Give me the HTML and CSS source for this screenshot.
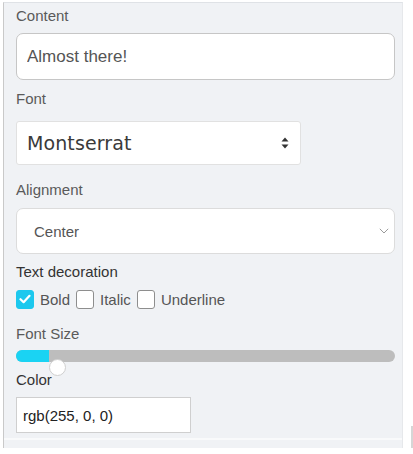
FILE: index.html
```html
<!DOCTYPE html>
<html>
<head>
<meta charset="utf-8">
<link rel="stylesheet" href="styles.css">
</head>
<body>
<div class="page">
  <div class="panel">
    <div class="form">
      <div class="label l-content">Content</div>
      <input class="text-input" type="text" value="Almost there!">
      <div class="label l-font">Font</div>
      <div class="select select-font">
        <span class="font-value">Montserrat</span>
        <svg class="updown" width="8" height="12" viewBox="0 0 8 12"><path d="M4 0.5 L7.5 4.5 H0.5 Z" fill="#333"/><path d="M4 11.5 L7.5 7.5 H0.5 Z" fill="#333"/></svg>
      </div>
      <div class="label l-align">Alignment</div>
      <div class="select select-align">
        <span class="align-value">Center</span>
        <svg class="chev" width="10" height="6" viewBox="0 0 10 6"><path d="M0.8 0.8 L5 5 L9.2 0.8" fill="none" stroke="#9a9a9a" stroke-width="1"/></svg>
      </div>
      <div class="label dark l-deco">Text decoration</div>
      <div class="checks">
        <span class="check on"><svg width="12" height="10" viewBox="0 0 12 10"><path d="M1.5 5.2 L4.6 8.2 L10.5 1.8" fill="none" stroke="#fff" stroke-width="2.2" stroke-linecap="round" stroke-linejoin="round"/></svg></span>
        <span class="check-label">Bold</span>
        <span class="check"></span>
        <span class="check-label">Italic</span>
        <span class="check"></span>
        <span class="check-label">Underline</span>
      </div>
      <div class="label l-size">Font Size</div>
      <div class="slider">
        <div class="fill" style="width: 33px"></div>
        <div class="thumb"></div>
      </div>
      <div class="label dark l-color">Color</div>
      <input class="color-input" type="text" value="rgb(255, 0, 0)">
    </div>
    <div class="sep"></div>
  </div>
  <div class="gutter"><div class="bar"></div></div>
</div>
</body>
</html>
```

FILE: styles.css
```css
html, body {
  margin: 0;
  padding: 0;
  background: #ffffff;
}
body {
  font-family: "Liberation Sans", Arial, sans-serif;
  width: 413px;
  height: 454px;
  overflow: hidden;
}
.page {
  display: flex;
  align-items: flex-end;
  padding-top: 2px;
  padding-left: 3px;
  height: 446px;
}
.panel {
  width: 399px;
  height: 445px;
  background: #f0f2f5;
  border-top: 1px solid #dfe2e6;
  border-left: 1px solid #c9c9c9;
  border-right: 1px solid #e6e8eb;
  display: flex;
  flex-direction: column;
}
.form {
  display: flex;
  flex-direction: column;
  align-items: flex-start;
  padding: 1px 7px 0 12px;
  height: 431px;
  box-sizing: border-box;
}
.label {
  font-size: 15px;
  line-height: 17px;
  color: #5a5a5a;
}
.label.dark {
  color: #333;
}
.l-content { margin-top: 3px; }
.l-font { margin-top: 10px; }
.l-align { margin-top: 16px; }
.l-deco { margin-top: 9px; }
.l-size { margin-top: 17px; }
.l-color { margin-top: 9px; }

.text-input {
  margin: 9px 0 0 0;
  box-sizing: border-box;
  width: 379px;
  height: 47px;
  border: 1px solid #c6c6c6;
  border-radius: 7px;
  background: #fff;
  padding: 0 10px;
  font-family: "Liberation Sans", Arial, sans-serif;
  font-size: 17px;
  color: #555;
  outline: none;
}
.select {
  box-sizing: border-box;
  background: #fff;
  display: flex;
  align-items: center;
  justify-content: space-between;
}
.select-font {
  margin-top: 14px;
  width: 285px;
  height: 44px;
  border: 1px solid #e1e1e1;
  border-radius: 3px;
  padding: 0 11px 0 10px;
}
.font-value {
  font-family: "DejaVu Sans", sans-serif;
  font-size: 19px;
  color: #3a3a3a;
  letter-spacing: 0.1px;
}
.select-align {
  margin-top: 10px;
  width: 379px;
  height: 46px;
  border: 1px solid #dcdcdc;
  border-radius: 7px;
  padding: 0 5px 0 17px;
}
.align-value {
  font-size: 15px;
  color: #555;
}
.chev {
  display: block;
}
.updown {
  display: block;
}
.checks {
  margin-top: 10px;
  display: flex;
  align-items: center;
  height: 18px;
}
.check {
  box-sizing: border-box;
  width: 18px;
  height: 19px;
  border: 1px solid #8e8e8e;
  border-radius: 3px;
  background: #fff;
  display: flex;
  align-items: center;
  justify-content: center;
  margin-right: 6px;
}
.check.on {
  background: #1cc8ee;
  border-color: #1cc8ee;
}
.check-label {
  font-size: 15px;
  line-height: 17px;
  color: #555;
  margin-right: 6px;
}
.slider {
  position: relative;
  margin-top: 8px;
  width: 379px;
  height: 12px;
  border-radius: 6px;
  background: #bdbdbd;
}
.fill {
  height: 12px;
  border-radius: 6px 0 0 6px;
  background: #1ad3f3;
}
.thumb {
  position: absolute;
  left: 33px;
  top: 9px;
  box-sizing: border-box;
  width: 17px;
  height: 17px;
  border-radius: 50%;
  background: #fff;
  border: 1px solid #cfcfcf;
}
.color-input {
  margin: 9px 0 0 0;
  box-sizing: border-box;
  width: 175px;
  height: 36px;
  border: 1px solid #cfcfcf;
  border-radius: 0;
  background: #fff;
  padding: 0 6px;
  font-family: "Liberation Sans", Arial, sans-serif;
  font-size: 15px;
  color: #222;
  outline: none;
}
.sep {
  margin-top: 4px;
  height: 2px;
  background: #f9fafb;
}
.gutter {
  width: 10px;
  display: flex;
  justify-content: flex-end;
  padding-bottom: 0;
}
.bar {
  width: 2px;
  height: 22px;
  background: #d6d6d6;
}
```
